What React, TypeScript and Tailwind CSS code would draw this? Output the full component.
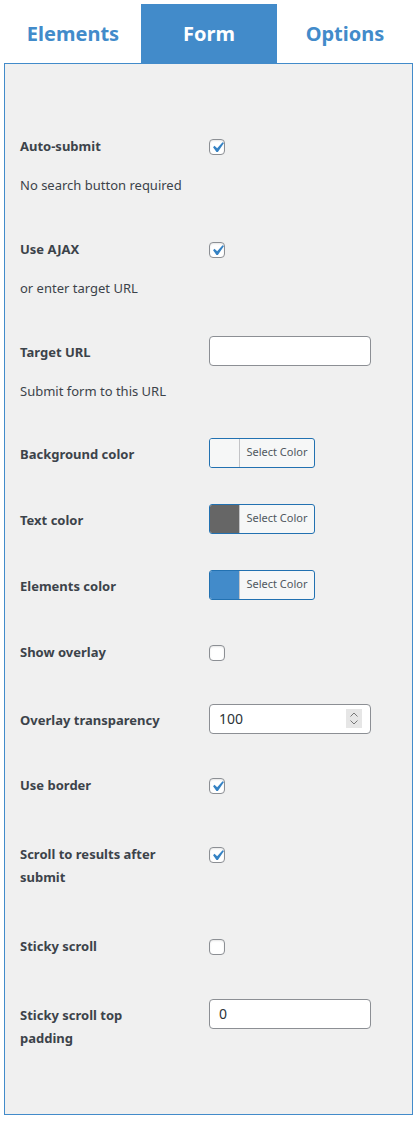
import React from "react";

const LABEL = "text-[13px] leading-[23px] font-bold text-[#3c434a]";

function Checkbox({ checked }: { checked: boolean }) {
  return (
    <span className="relative inline-block w-[16px] h-[16px] rounded-[4px] border border-[#8c8f94] bg-white shadow-[inset_0_1px_2px_rgba(0,0,0,0.1)]">
      {checked && (
        <svg viewBox="0 0 20 20" className="absolute left-[-3px] top-[-3px] w-[21px] h-[21px]">
          <path d="M14.83 4.89l1.34.94-5.81 8.38H9.02L5.78 9.67l1.34-1.25 2.57 2.4z" fill="#3582c4" />
        </svg>
      )}
    </span>
  );
}

function TextInput({ value, spinner }: { value: string; spinner?: boolean }) {
  return (
    <span className="relative -mt-[4px] flex items-center w-[162px] h-[30px] rounded-[4px] border border-[#8c8f94] bg-white pl-[9px] text-[14px] text-[#2c3338]">
      {value}
      {spinner && (
        <span className="absolute right-[8px] top-[4px] w-[16px] h-[19px] bg-[#e6e6e6] flex flex-col items-center justify-center gap-[3px]">
          <svg width="8" height="5" viewBox="0 0 8 5">
            <path d="M0.5 4.5L4 1L7.5 4.5" stroke="#777" strokeWidth="1" fill="none" />
          </svg>
          <svg width="8" height="5" viewBox="0 0 8 5">
            <path d="M0.5 0.5L4 4L7.5 0.5" stroke="#777" strokeWidth="1" fill="none" />
          </svg>
        </span>
      )}
    </span>
  );
}

function ColorButton({ swatch }: { swatch: string }) {
  return (
    <span className="-mt-[4px] flex w-[106px] h-[30px] rounded-[3px] border border-[#2271b1] bg-[#f6f7f7] overflow-hidden">
      <span className="w-[30px] h-full border-r border-[#c3c4c7]" style={{ backgroundColor: swatch }} />
      <span className="flex-1 flex items-center justify-center text-[11px] text-[#50575e]">Select Color</span>
    </span>
  );
}

type Row = {
  label: React.ReactNode;
  desc?: string;
  control: React.ReactNode;
  h: string;
};

export default function App() {
  const rows: Row[] = [
    { label: "Auto-submit", desc: "No search button required", control: <Checkbox checked />, h: "h-[103px]" },
    { label: "Use AJAX", desc: "or enter target URL", control: <Checkbox checked />, h: "h-[103px]" },
    { label: "Target URL", desc: "Submit form to this URL", control: <TextInput value="" />, h: "h-[102px]" },
    { label: "Background color", control: <ColorButton swatch="#f6f7f7" />, h: "h-[66px]" },
    { label: "Text color", control: <ColorButton swatch="#666666" />, h: "h-[66px]" },
    { label: "Elements color", control: <ColorButton swatch="#428bca" />, h: "h-[66px]" },
    { label: "Show overlay", control: <Checkbox checked={false} />, h: "h-[68px]" },
    { label: "Overlay transparency", control: <TextInput value="100" spinner />, h: "h-[65px]" },
    { label: "Use border", control: <Checkbox checked />, h: "h-[69px]" },
    {
      label: (
        <>
          Scroll to results after
          <br />
          submit
        </>
      ),
      control: <Checkbox checked />,
      h: "h-[92px]",
    },
    { label: "Sticky scroll", control: <Checkbox checked={false} />, h: "h-[69px]" },
    {
      label: (
        <>
          Sticky scroll top
          <br />
          padding
        </>
      ),
      control: <TextInput value="0" />,
      h: "h-[60px]",
    },
  ];

  return (
    <div className="w-[417px] h-[1122px] bg-white pt-[4px] px-[4px] font-['Noto_Sans','Open_Sans',sans-serif]">
      <div className="flex pl-[1px]">
        <div className="w-[136px] h-[59px] flex items-center justify-center text-[20px] font-bold text-[#428bca]">Elements</div>
        <div className="w-[136px] h-[59px] flex items-center justify-center text-[20px] font-bold text-white bg-[#428bca]">Form</div>
        <div className="w-[136px] h-[59px] flex items-center justify-center text-[20px] font-bold text-[#428bca]">Options</div>
      </div>
      <div className="h-[1052px] border border-[#428bca] bg-[#f0f0f0] pl-[15px] pt-[71px]">
        {rows.map((r, i) => (
          <div key={i} className={`flex items-start ${r.h}`}>
            <div className="w-[189px] pr-[10px]">
              <div className={LABEL}>{r.label}</div>
              {r.desc && (
                <div className="mt-[16px] text-[13px] leading-[23px] text-[#3c434a]">{r.desc}</div>
              )}
            </div>
            <div className="h-[23px] flex items-center">{r.control}</div>
          </div>
        ))}
      </div>
    </div>
  );
}
